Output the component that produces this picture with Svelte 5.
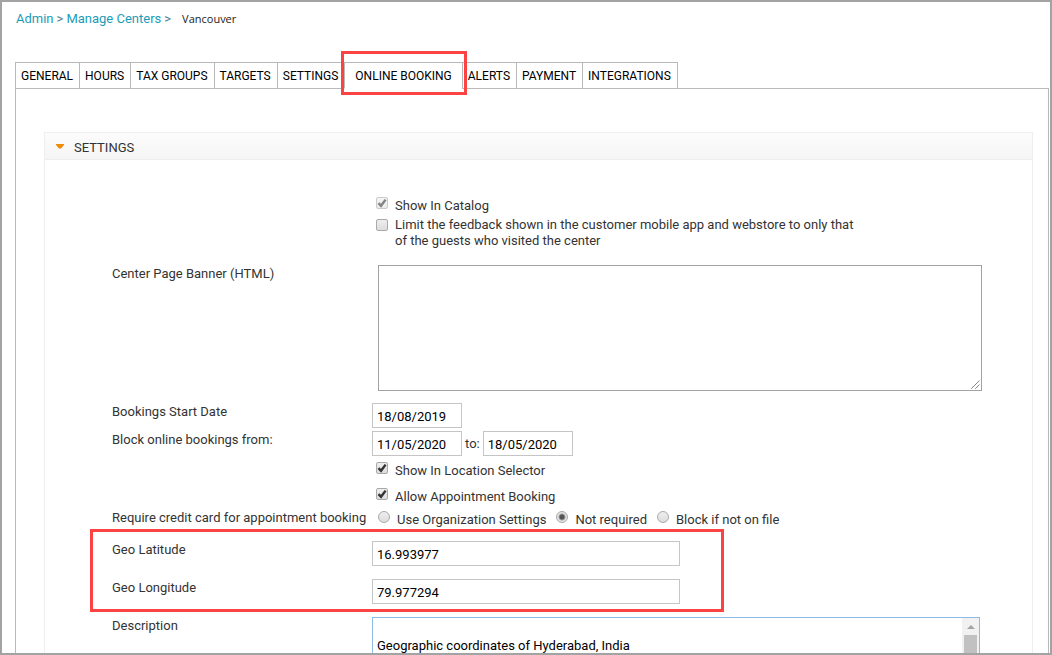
<script>
  const tabs = ['GENERAL', 'HOURS', 'TAX GROUPS', 'TARGETS', 'SETTINGS', 'ONLINE BOOKING', 'ALERTS', 'PAYMENT', 'INTEGRATIONS'];
  let active = $state('ONLINE BOOKING');
  let open = $state(true);

  let inCatalog = $state(true);
  let limitFeedback = $state(false);
  let inLocationSelector = $state(true);
  let allowBooking = $state(true);

  const cardOptions = ['Use Organization Settings', 'Not required', 'Block if not on file'];
  let card = $state('Not required');

  let banner = $state('');
  let startDate = $state('18/08/2019');
  let blockFrom = $state('11/05/2020');
  let blockTo = $state('18/05/2020');
  let latitude = $state('16.993977');
  let longitude = $state('79.977294');
  let description = $state('\nGeographic coordinates of Hyderabad, India');
</script>

<div class="window">
  <nav class="crumbs" aria-label="Breadcrumb">
    <a href="#admin">Admin</a><span>&gt;</span><a href="#centers">Manage Centers</a><span>&gt;</span><strong>Vancouver</strong>
  </nav>

  <div class="tabs" role="tablist">
    {#each tabs as tab}
      <button type="button" role="tab" aria-selected={tab === active} class:active={tab === active} onclick={() => (active = tab)}>{tab}</button>
    {/each}
  </div>

  <main class="page">
    <section class="panel">
      <button type="button" class="heading" aria-expanded={open} onclick={() => (open = !open)}>
        <svg width="8" height="5" viewBox="0 0 8 5" aria-hidden="true"><path d="M0 0h8v1L5 4.5H3L0 1z" fill="#ef8c08" /></svg>
        SETTINGS
      </button>

      {#if open}
        <form class="form">
          <div class="checks">
            <label class="check"><input type="checkbox" bind:checked={inCatalog} disabled /><span>Show In Catalog</span></label>
            <label class="check low"><input type="checkbox" bind:checked={limitFeedback} /><span>Limit the feedback shown in the customer mobile app and webstore to only that of the guests who visited the center</span></label>
          </div>

          <div class="row banner-row">
            <label for="banner">Center Page Banner (HTML)</label>
            <div class="area">
              <textarea id="banner" bind:value={banner}></textarea>
              <svg class="grip" width="9" height="9" viewBox="0 0 9 9" aria-hidden="true"><path d="M0.5 8.5l8-8M4.5 8.5l4-4" stroke="#444" stroke-width="1" stroke-dasharray="1.1 0.3" /></svg>
            </div>
          </div>

          <div class="row date-row">
            <label for="start">Bookings Start Date</label>
            <div><input class="text date" id="start" type="text" bind:value={startDate} /></div>
          </div>
          <div class="row range-row">
            <label for="from">Block online bookings from:</label>
            <div class="range">
              <input class="text date" id="from" type="text" bind:value={blockFrom} />
              <label for="to">to:</label>
              <input class="text date" id="to" type="text" bind:value={blockTo} />
            </div>
          </div>

          <div class="checks spaced">
            <label class="check"><input type="checkbox" bind:checked={inLocationSelector} /><span>Show In Location Selector</span></label>
            <label class="check"><input type="checkbox" bind:checked={allowBooking} /><span>Allow Appointment Booking</span></label>
          </div>

          <div class="row card-row" role="radiogroup" aria-labelledby="card-label">
            <span id="card-label">Require credit card for appointment booking</span>
            <div class="radios">
              {#each cardOptions as option}
                <label><input type="radio" name="card" value={option} bind:group={card} /><span>{option}</span></label>
              {/each}
            </div>
          </div>

          <div class="geo">
            <div class="row">
              <label for="lat">Geo Latitude</label>
              <div><input class="text wide" id="lat" type="text" bind:value={latitude} /></div>
            </div>
            <div class="row">
              <label for="lng">Geo Longitude</label>
              <div><input class="text wide" id="lng" type="text" bind:value={longitude} /></div>
            </div>
          </div>

          <div class="row">
            <label for="desc">Description</label>
            <div class="description">
              <textarea id="desc" bind:value={description}></textarea>
              <div class="track" aria-hidden="true">
                <svg width="8" height="4" viewBox="0 0 8 4"><path d="M0 4L4 0l4 4z" fill="#a3a3a3" /></svg>
                <div class="thumb"></div>
              </div>
            </div>
          </div>
        </form>
      {/if}
    </section>
  </main>
</div>

<style>
  :global(body) {
    margin: 0;
    background: #fff;
  }

  .window,
  .window :global(*) {
    box-sizing: border-box;
  }

  .window {
    display: flex;
    flex-direction: column;
    height: 100vh;
    overflow: hidden;
    border: 2px solid #a3a3a3;
    padding: 9px 1px 0 13px;
    font: 13px/16px Roboto, "Liberation Sans", sans-serif;
    color: #333;
  }

  button,
  input,
  textarea {
    margin: 0;
    font: inherit;
    color: #000;
  }

  .crumbs {
    display: flex;
    gap: 3px;
    height: 18px;
    padding-left: 1px;
    color: #4a7c94;
  }

  .crumbs a {
    color: #1b9cb7;
    text-decoration: none;
  }

  .crumbs strong {
    margin-left: 8px;
    font: 11px/16px "Open Sans", "Noto Sans", sans-serif;
    color: #222;
  }

  .tabs {
    display: flex;
    margin-top: 35px;
  }

  .tabs button {
    position: relative;
    height: 27px;
    margin: 0 0 -1px;
    padding: 0 6px 0 5px;
    border: 1px solid #b9b9b9;
    border-right: 0;
    background: #fff;
    font-size: 12px;
    white-space: nowrap;
  }

  .tabs button:last-child {
    border-right: 1px solid #b9b9b9;
  }

  .tabs .active {
    z-index: 1;
    padding: 0 10px;
    border-bottom-color: #fff;
  }

  .tabs .active::after {
    content: "";
    position: absolute;
    inset: -12px -5px -7px -4px;
    border: 3px solid #fc4343;
  }

  .page {
    flex: 1;
    border: 1px solid #b9b9b9;
    border-bottom: 0;
    padding: 43px 15px 0 28px;
  }

  .panel {
    height: 100%;
    border: 1px solid #eee;
    border-bottom: 0;
  }

  .heading {
    display: flex;
    align-items: center;
    gap: 10px;
    width: 100%;
    height: 27px;
    padding: 4px 11px 0;
    border: 0;
    border-bottom: 1px solid #eee;
    background: linear-gradient(#fcfcfc, #f5f5f5);
    color: #333;
  }

  .heading svg {
    margin-bottom: 4px;
  }

  .form {
    display: flex;
    flex-direction: column;
    padding: 37px 50px 0 67px;
  }

  .row {
    display: grid;
    grid-template-columns: 260px minmax(0, 1fr);
    align-items: start;
  }

  .row > label,
  .row > span,
  .range > label,
  .check > span,
  .radios span {
    padding-top: 1px;
  }

  .checks {
    display: grid;
    gap: 2px;
    padding-left: 264px;
  }

  .check {
    display: flex;
    gap: 7px;
    max-width: 490px;
  }

  .spaced {
    gap: 9px;
    margin-top: 6px;
  }

  input[type="checkbox"],
  input[type="radio"] {
    appearance: none;
    flex: none;
    width: 12px;
    height: 12px;
    border: 1px solid #a9a9a9;
    border-radius: 2px;
    background: linear-gradient(#eee, #ddd);
  }

  input[type="checkbox"]:checked {
    background: url("data:image/svg+xml,%3Csvg xmlns='http://www.w3.org/2000/svg' viewBox='0 0 10 10'%3E%3Cpath d='M1.5 5.2L4 7.8 8.6 1.6' fill='none' stroke='%23333' stroke-width='2.4'/%3E%3C/svg%3E"), linear-gradient(#eee, #ddd);
  }

  input[type="checkbox"]:disabled {
    opacity: 0.6;
  }

  .low input {
    margin-top: 3px;
  }

  .banner-row {
    margin-top: 16px;
  }

  .area {
    position: relative;
    height: 126px;
    margin: 0 0 0 6px;
  }

  textarea {
    display: block;
    width: 100%;
    height: 100%;
    border: 1px solid #a3a3a3;
    border-radius: 0;
    padding: 4px;
    background: #fff;
    resize: none;
    outline: 0;
  }

  .grip {
    position: absolute;
    right: 2px;
    bottom: 2px;
  }

  .date-row {
    margin-top: 12px;
  }

  .range-row {
    margin-top: 3px;
  }

  .text {
    display: block;
    height: 25px;
    border: 1px solid #c5c5c5;
    border-radius: 0;
    padding: 2px 4px 0;
    background: #fff;
    outline: 0;
  }

  .date {
    width: 90px;
  }

  .wide {
    width: 100%;
    max-width: 308px;
  }

  .range {
    display: flex;
    align-items: center;
    gap: 3px;
  }

  .card-row {
    margin-top: 4px;
  }

  .radios {
    display: flex;
    gap: 10px;
    padding: 2px 0 0 6px;
  }

  .radios label {
    display: flex;
    gap: 7px;
    white-space: nowrap;
  }

  input[type="radio"] {
    border-radius: 50%;
  }

  input[type="radio"]:checked {
    background: radial-gradient(circle, #555 0 2px, #e5e5e5 4px);
  }

  .geo {
    position: relative;
    display: grid;
    gap: 13px;
    margin: 13px 0;
  }

  .geo::after {
    content: "";
    position: absolute;
    top: -12px;
    bottom: -8px;
    left: -22px;
    width: 628px;
    border: 3px solid #fc4343;
    pointer-events: none;
  }

  .description {
    position: relative;
    height: 126px;
    margin-right: 2px;
  }

  .description textarea {
    border-color: #8dbbe6;
    overflow: hidden;
  }

  .track {
    position: absolute;
    top: 1px;
    right: 1px;
    bottom: 1px;
    width: 17px;
    background: #f1f1f1;
    display: flex;
    flex-direction: column;
    align-items: center;
    gap: 6px;
    padding-top: 7px;
  }

  .thumb {
    flex: 1;
    width: 13px;
    background: #c1c1c1;
  }
</style>
